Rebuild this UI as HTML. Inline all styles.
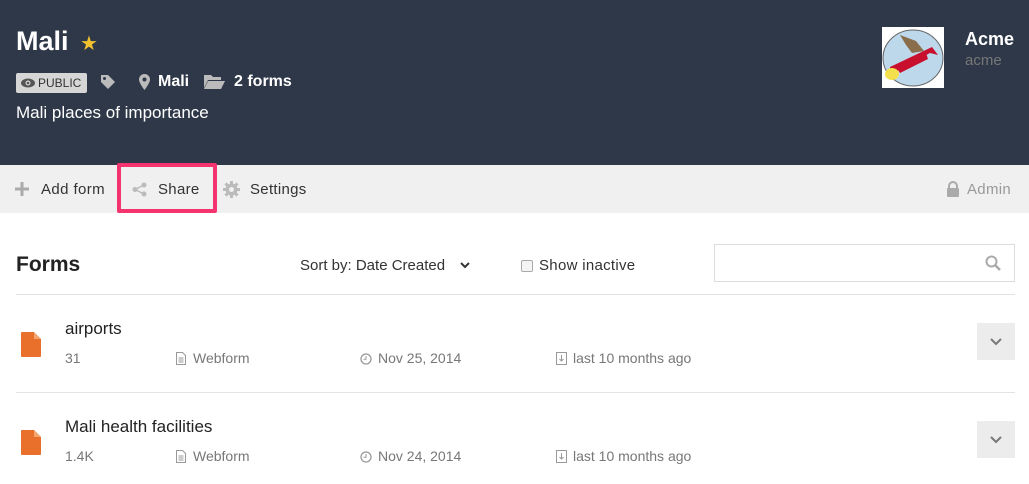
<!DOCTYPE html>
<html><head><style>
*{margin:0;padding:0;box-sizing:border-box}
body{width:1029px;height:484px;overflow:hidden;background:#fff;font-family:"Liberation Sans",sans-serif;position:relative}
.a{position:absolute;white-space:nowrap}
.hdr{position:absolute;left:0;top:0;width:1029px;height:165px;background:#2f3848}
.tb{position:absolute;left:0;top:165px;width:1029px;height:48px;background:#f0f0f0}
.g{color:#777;font-size:14px}
.chev{position:absolute;width:38px;height:37px;background:#ececec}
</style></head><body>
<div class="hdr"></div>
<div class="a" style="left:16px;top:26px;font-size:27px;font-weight:bold;color:#fff">Mali</div>
<div class="a" style="left:80px;top:31px;color:#f2c12e;font-size:20px">★</div>
<div class="a" style="left:16px;top:73px;width:71px;height:20px;background:#d6d6d6;border-radius:2px;font-size:12px;color:#333;line-height:20px;padding-left:22px">PUBLIC</div>
<svg class="a" style="left:20px;top:78px" width="16" height="10" viewBox="0 0 16 10"><ellipse cx="8" cy="5" rx="7" ry="4.5" fill="#555"/><circle cx="8" cy="5" r="2.5" fill="#d6d6d6"/><circle cx="8" cy="5" r="1.3" fill="#555"/></svg>
<svg class="a" style="left:100px;top:74px" width="16" height="16" viewBox="0 0 16 16"><path d="M1 1h7l7 7-7 7-7-7z" fill="#bbb"/><circle cx="4.5" cy="4.5" r="1.5" fill="#2f3848"/></svg>
<svg class="a" style="left:139px;top:74px" width="11" height="16" viewBox="0 0 11 16"><path d="M5.5 0a5.5 5.5 0 0 1 5.5 5.5C11 9 5.5 16 5.5 16S0 9 0 5.5A5.5 5.5 0 0 1 5.5 0z" fill="#bbb"/><circle cx="5.5" cy="5.5" r="2" fill="#2f3848"/></svg>
<div class="a" style="left:158px;top:73px;font-size:16px;font-weight:bold;color:#fff">Mali</div>
<svg class="a" style="left:204px;top:74px" width="21" height="15" viewBox="0 0 21 15"><path d="M0 1h7l2 2h8v3H4L0 14z" fill="#bbb"/><path d="M4 7h17l-4 8H0z" fill="#bbb"/></svg>
<div class="a" style="left:234px;top:73px;font-size:16px;font-weight:bold;color:#fff">2 forms</div>
<div class="a" style="left:16px;top:103px;font-size:17px;color:#fff">Mali places of importance</div>
<div class="a" style="left:882px;top:27px;width:62px;height:61px;background:#fff;overflow:hidden">
<svg width="62" height="61" viewBox="0 0 62 61"><ellipse cx="31" cy="31" rx="30" ry="28" fill="#bcd8ea" stroke="#666"/><path d="M8 48l40-22 8 2-6-8-42 20z" fill="#c8102e"/><path d="M14 40l30-14 2 6-28 14z" fill="#c8102e"/><ellipse cx="10" cy="47" rx="7" ry="6" fill="#f4e04d"/><path d="M18 8l16 6 8 10-12 2-6-8z" fill="#8a6d4b"/></svg></div>
<div class="a" style="left:965px;top:29px;font-size:18px;font-weight:bold;color:#fff">Acme</div>
<div class="a" style="left:965px;top:52px;font-size:15px;color:#777">acme</div>
<div class="tb"></div>
<div class="a" style="left:117px;top:163px;width:100px;height:50px;border:4px solid #f5336e;border-radius:2px"></div>
<svg class="a" style="left:15px;top:182px" width="14" height="14" viewBox="0 0 14 14"><path d="M7 0v14M0 7h14" stroke="#aaa" stroke-width="3"/></svg>
<div class="a" style="left:41px;top:181px;font-size:15px;color:#333;letter-spacing:0.4px">Add form</div>
<svg class="a" style="left:132px;top:182px" width="15" height="15" viewBox="0 0 15 15"><circle cx="12" cy="3" r="2.5" fill="#bbb"/><circle cx="3" cy="7.5" r="2.5" fill="#bbb"/><circle cx="12" cy="12" r="2.5" fill="#bbb"/><path d="M12 3L3 7.5 12 12" stroke="#bbb" stroke-width="1.5" fill="none"/></svg>
<div class="a" style="left:158px;top:181px;font-size:15px;color:#333;letter-spacing:0.3px">Share</div>
<svg class="a" style="left:223px;top:181px" width="17" height="17" viewBox="0 0 17 17"><g fill="#bbb"><circle cx="8.5" cy="8.5" r="6"/><rect x="7" y="0" width="3" height="17"/><rect x="0" y="7" width="17" height="3"/><rect x="7" y="0" width="3" height="17" transform="rotate(45 8.5 8.5)"/><rect x="7" y="0" width="3" height="17" transform="rotate(-45 8.5 8.5)"/></g><circle cx="8.5" cy="8.5" r="2.5" fill="#f0f0f0"/></svg>
<div class="a" style="left:250px;top:181px;font-size:15px;color:#333;letter-spacing:0.3px">Settings</div>
<svg class="a" style="left:946px;top:181px" width="14" height="16" viewBox="0 0 14 16"><path d="M3 7V5a4 4 0 0 1 8 0v2" stroke="#aaa" stroke-width="2" fill="none"/><rect x="1" y="7" width="12" height="9" rx="1" fill="#aaa"/></svg>
<div class="a" style="left:967px;top:181px;font-size:15px;color:#999;letter-spacing:0.3px">Admin</div>
<div class="a" style="left:16px;top:253px;font-size:21px;font-weight:bold;color:#222">Forms</div>
<div class="a" style="left:300px;top:257px;font-size:15px;color:#333">Sort by: Date Created</div>
<svg class="a" style="left:460px;top:262px" width="10" height="7" viewBox="0 0 10 7"><path d="M1 1l4 4 4-4" stroke="#333" stroke-width="2" fill="none"/></svg>
<div class="a" style="left:521px;top:260px;width:12px;height:12px;border:1px solid #aaa;border-radius:2px;background:#f4f4f4"></div>
<div class="a" style="left:539px;top:257px;font-size:15px;color:#333;letter-spacing:0.3px">Show inactive</div>
<div class="a" style="left:714px;top:244px;width:301px;height:38px;border:1px solid #ddd"></div>
<svg class="a" style="left:985px;top:255px" width="16" height="16" viewBox="0 0 16 16"><circle cx="6.5" cy="6.5" r="5" stroke="#aaa" stroke-width="2" fill="none"/><path d="M10 10l5 5" stroke="#aaa" stroke-width="2.5"/></svg>
<div class="a" style="left:16px;top:294px;width:999px;height:1px;background:#e3e3e3"></div>
<div class="a" style="left:16px;top:392px;width:999px;height:1px;background:#e3e3e3"></div>

<svg class="a" style="left:21px;top:332px" width="20" height="25" viewBox="0 0 20 25"><path d="M1 0h12l7 7v17a1 1 0 0 1-1 1H1a1 1 0 0 1-1-1V1a1 1 0 0 1 1-1z" fill="#e8702a"/><path d="M13 0v7h7" fill="#f4a56e"/></svg>
<div class="a" style="left:65px;top:319px;font-size:17px;color:#222">airports</div>
<div class="a g" style="left:65px;top:350px">31</div>
<svg class="a" style="left:176px;top:352px" width="10" height="13" viewBox="0 0 10 13"><path d="M.5.5h6l3 3v9h-9z M2.5 6h5M2.5 8h5M2.5 10h5" stroke="#999" fill="none"/></svg>
<div class="a g" style="left:193px;top:350px">Webform</div>
<svg class="a" style="left:360px;top:353px" width="12" height="12" viewBox="0 0 12 12"><circle cx="6" cy="6" r="5" stroke="#999" stroke-width="1.3" fill="none"/><path d="M6 3v3.3h-2.5" stroke="#999" fill="none"/></svg>
<div class="a g" style="left:378px;top:350px">Nov 25, 2014</div>
<svg class="a" style="left:556px;top:352px" width="11" height="13" viewBox="0 0 11 13"><rect x=".5" y=".5" width="10" height="12" stroke="#999" fill="none"/><path d="M5.5 3v6M3.5 7l2 2 2-2" stroke="#999" fill="none"/></svg>
<div class="a g" style="left:573px;top:350px">last 10 months ago</div>
<div class="chev" style="left:977px;top:323px"><svg style="position:absolute;left:13px;top:15px" width="12" height="8" viewBox="0 0 12 8"><path d="M1 1l5 5 5-5" stroke="#777" stroke-width="2" fill="none"/></svg></div>

<svg class="a" style="left:21px;top:430px" width="20" height="25" viewBox="0 0 20 25"><path d="M1 0h12l7 7v17a1 1 0 0 1-1 1H1a1 1 0 0 1-1-1V1a1 1 0 0 1 1-1z" fill="#e8702a"/><path d="M13 0v7h7" fill="#f4a56e"/></svg>
<div class="a" style="left:65px;top:417px;font-size:17px;color:#222">Mali health facilities</div>
<div class="a g" style="left:65px;top:448px">1.4K</div>
<svg class="a" style="left:176px;top:450px" width="10" height="13" viewBox="0 0 10 13"><path d="M.5.5h6l3 3v9h-9z M2.5 6h5M2.5 8h5M2.5 10h5" stroke="#999" fill="none"/></svg>
<div class="a g" style="left:193px;top:448px">Webform</div>
<svg class="a" style="left:360px;top:451px" width="12" height="12" viewBox="0 0 12 12"><circle cx="6" cy="6" r="5" stroke="#999" stroke-width="1.3" fill="none"/><path d="M6 3v3.3h-2.5" stroke="#999" fill="none"/></svg>
<div class="a g" style="left:378px;top:448px">Nov 24, 2014</div>
<svg class="a" style="left:556px;top:450px" width="11" height="13" viewBox="0 0 11 13"><rect x=".5" y=".5" width="10" height="12" stroke="#999" fill="none"/><path d="M5.5 3v6M3.5 7l2 2 2-2" stroke="#999" fill="none"/></svg>
<div class="a g" style="left:573px;top:448px">last 10 months ago</div>
<div class="chev" style="left:977px;top:421px"><svg style="position:absolute;left:13px;top:15px" width="12" height="8" viewBox="0 0 12 8"><path d="M1 1l5 5 5-5" stroke="#777" stroke-width="2" fill="none"/></svg></div>
</body></html>
